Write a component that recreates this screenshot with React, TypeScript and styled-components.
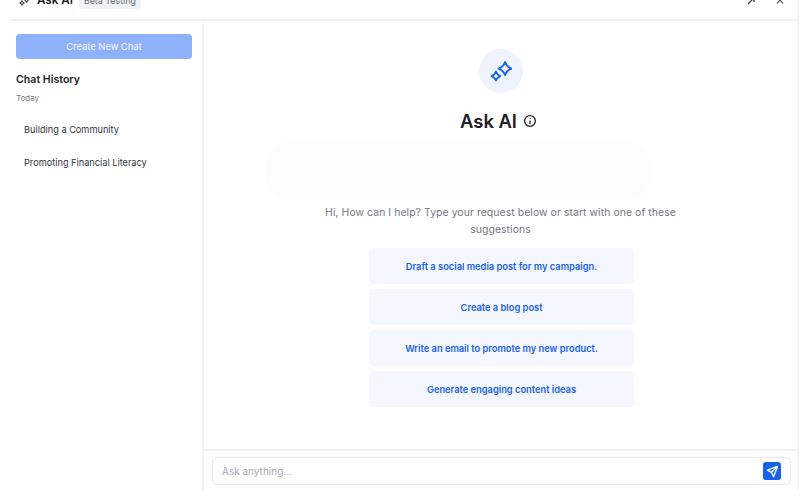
import React from 'react';
import styled, {createGlobalStyle} from 'styled-components';

const GlobalStyle = createGlobalStyle`
  html, body {
    margin: 0;
    padding: 0;
    background: #fff;
    overflow: hidden;
  }
  body {
    font-family: Inter, "Liberation Sans", sans-serif;
  }
`;

const Page = styled.div`
  width: 811px;
  height: 501px;
  overflow: hidden;
  background: #fff;
`;

const Modal = styled.div`
  width: 799px;
  height: 490px;
  padding-left: 9px;
  box-sizing: border-box;
  display: flex;
  flex-direction: column;
  border-right: 2px solid #f3f4f7;
`;

const Header = styled.header`
  height: 21px;
  flex: none;
  overflow: hidden;
  display: flex;
  align-items: flex-start;
  justify-content: space-between;
  border-bottom: 2px solid #eff0f3;
  padding: 0 13px 0 10px;
  box-sizing: border-box;
`;

const HeaderLeft = styled.div`
  display: flex;
  align-items: center;
  gap: 7px;
  height: 18px;
  margin-top: -9px;
  flex: none;
`;

const HeaderTitle = styled.span`
  font-size: 11.6px;
  font-weight: 600;
  color: #1a1c22;
`;

const Badge = styled.span`
  font-size: 8.9px;
  line-height: 11px;
  color: #6a6e78;
  background: #f1f2f5;
  border-radius: 3px;
  padding: 3px 5px;
  margin-left: -1px;
`;

const HeaderIcons = styled.div`
  display: flex;
  align-items: center;
  gap: 21px;
  height: 10px;
  margin-top: -5px;
  flex: none;
  color: #3a3d45;
`;

const Body = styled.div`
  flex: 1;
  display: flex;
  min-height: 0;
  margin-left: -9px;
`;

const Sidebar = styled.aside`
  width: 204px;
  flex: none;
  box-sizing: border-box;
  border-right: 2px solid #f0f1f4;
  padding: 11px 10px 0 16px;
  margin-top: 2px;
`;

const NewChat = styled.button`
  width: 100%;
  height: 25px;
  display: block;
  border: none;
  border-radius: 4px;
  background: #8fb0fb;
  color: #e9effe;
  font: 500 9.3px Inter, "Liberation Sans", sans-serif;
`;

const HistoryTitle = styled.h2`
  margin: 14px 0 0;
  font-size: 10.6px;
  line-height: 14px;
  font-weight: 600;
  color: #1d1f25;
`;

const DayLabel = styled.div`
  margin-top: 5px;
  font-size: 8px;
  line-height: 12px;
  color: #777b85;
`;

const HistoryList = styled.div`
  margin-top: 9px;
  display: flex;
  flex-direction: column;
`;

const HistoryItem = styled.div`
  height: 33px;
  display: flex;
  align-items: center;
  padding-left: 8px;
  font-size: 9.2px;
  color: #33363e;
`;

const Main = styled.main`
  flex: 1;
  min-width: 0;
  display: flex;
  flex-direction: column;
`;

const Content = styled.div`
  flex: 1;
  display: flex;
  flex-direction: column;
  align-items: center;
  padding-top: 28px;
  min-height: 0;
`;

const IconCircle = styled.div`
  width: 44px;
  height: 44px;
  border-radius: 50%;
  background: #eff3fd;
  display: flex;
  align-items: center;
  justify-content: center;
`;

const TitleRow = styled.div`
  margin: 14px 4px 0 0;
  display: flex;
  align-items: center;
  gap: 6px;
`;

const Title = styled.h1`
  margin: 0;
  font-size: 18.4px;
  line-height: 28px;
  font-weight: 600;
  color: #1e2027;
`;

const Placeholder = styled.div`
  margin: 6px 85px 0 0;
  width: 384px;
  height: 60px;
  border-radius: 24px;
  background: #fdfdfe;
`;

const Intro = styled.p`
  margin: 3px 0 0;
  width: 380px;
  text-align: center;
  font-size: 10.4px;
  line-height: 17px;
  letter-spacing: 0.08px;
  color: #73767f;
`;

const Suggestions = styled.div`
  margin: 10px 0 0 2px;
  display: flex;
  flex-direction: column;
  gap: 5px;
`;

const Suggestion = styled.button`
  width: 265px;
  height: 36px;
  padding: 0;
  border: none;
  border-radius: 4px;
  background: #f4f7fd;
  color: #1a62e8;
  font: 600 9.3px Inter, "Liberation Sans", sans-serif;
`;

const Composer = styled.div`
  flex: none;
  height: 41px;
  box-sizing: border-box;
  border-top: 2px solid #eff0f3;
  padding: 6px 6px 4px 8px;
`;

const InputBox = styled.div`
  height: 28px;
  box-sizing: border-box;
  border: 1px solid #e4e6f0;
  border-radius: 5px;
  display: flex;
  align-items: center;
  justify-content: space-between;
  padding: 0 9px;
`;

const InputHint = styled.span`
  font-size: 10px;
  color: #a6a9b1;
`;

const SendButton = styled.button`
  width: 18px;
  height: 18px;
  padding: 0;
  border: none;
  border-radius: 3px;
  background: #1463ea;
  display: flex;
  align-items: center;
  justify-content: center;
`;

const Sparkle = ({size, color, width}: {size: number; color: string; width: number}) => (
  <svg width={size} height={size} viewBox="0 0 24 24" fill="none" stroke={color} strokeWidth={width} strokeLinejoin="round">
    <path d="M16.4 2.2 Q18.2 7.5 23.5 9.3 Q18.2 11.1 16.4 16.4 Q14.6 11.1 9.3 9.3 Q14.6 7.5 16.4 2.2 Z" />
    <path d="M6.5 12.6 Q7.7 16.3 11.4 17.5 Q7.7 18.7 6.5 22.4 Q5.3 18.7 1.6 17.5 Q5.3 16.3 6.5 12.6 Z" />
  </svg>
);

const suggestions = [
  'Draft a social media post for my campaign.',
  'Create a blog post',
  'Write an email to promote my new product.',
  'Generate engaging content ideas',
];

const App = () => {
  return (
    <Page>
      <GlobalStyle />
      <Modal>
        <Header>
          <HeaderLeft>
            <Sparkle size={11} color="#3a3d45" width={2.2} />
            <HeaderTitle>Ask AI</HeaderTitle>
            <Badge>Beta Testing</Badge>
          </HeaderLeft>
          <HeaderIcons>
            <svg width="8" height="10" viewBox="0 0 8 10" fill="none" stroke="currentColor" strokeWidth="1.3">
              <path d="M1 9 L7 3 M3 2.5 H7 V7" />
            </svg>
            <svg width="8" height="10" viewBox="0 0 8 10" fill="none" stroke="currentColor" strokeWidth="1.1">
              <path d="M1 1.5 L7 8.5 M7 1.5 L1 8.5" />
            </svg>
          </HeaderIcons>
        </Header>
        <Body>
          <Sidebar>
            <NewChat>Create New Chat</NewChat>
            <HistoryTitle>Chat History</HistoryTitle>
            <DayLabel>Today</DayLabel>
            <HistoryList>
              <HistoryItem>Building a Community</HistoryItem>
              <HistoryItem>Promoting Financial Literacy</HistoryItem>
            </HistoryList>
          </Sidebar>
          <Main>
            <Content>
              <IconCircle>
                <Sparkle size={22} color="#1463ea" width={2} />
              </IconCircle>
              <TitleRow>
                <Title>Ask AI</Title>
                <svg width="14" height="14" viewBox="0 0 14 14" fill="none" stroke="#23252c" strokeWidth="1.3">
                  <circle cx="7" cy="7" r="5.4" />
                  <path d="M7 6.4 V10" />
                  <path d="M7 4 V5" />
                </svg>
              </TitleRow>
              <Placeholder />
              <Intro>Hi, How can I help? Type your request below or start with one of these suggestions</Intro>
              <Suggestions>
                {suggestions.map(text => (
                  <Suggestion key={text}>{text}</Suggestion>
                ))}
              </Suggestions>
            </Content>
            <Composer>
              <InputBox>
                <InputHint>Ask anything...</InputHint>
                <SendButton>
                  <svg width="13" height="13" viewBox="0 0 24 24" fill="none" stroke="#fff" strokeWidth="2.4" strokeLinejoin="round">
                    <path d="M21.5 2.5 L2.5 9.5 L10 13.5 L14 21.5 Z" />
                    <path d="M10 13.5 L21.5 2.5" />
                  </svg>
                </SendButton>
              </InputBox>
            </Composer>
          </Main>
        </Body>
      </Modal>
    </Page>
  );
};

export default App;
